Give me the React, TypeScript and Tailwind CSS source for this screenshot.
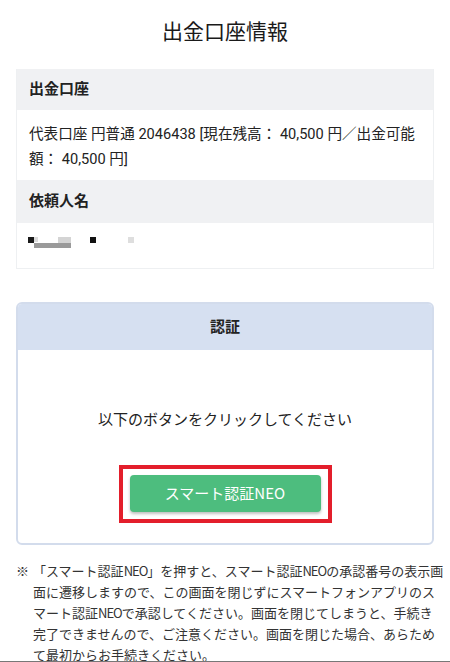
const font = { fontFamily: 'Roboto, "Noto Sans CJK JP", sans-serif' };
const cjk = { fontFamily: '"Noto Sans CJK JP", sans-serif' };

// the note's latin is set narrower, as on the phone
const Neo = () => <span className="tracking-[-1px]">NEO</span>;

// blurred-out requester name
const Mosaic = () => (
  <div className="flex flex-col pl-[11px]">
    <div className="flex h-[6px] items-start">
      <span className="h-[6px] w-[6px] bg-[#1a1a1a]" />
      <span className="h-[5px] w-[4px] bg-[#dcdcdc]" />
      <span className="ml-[20px] h-[6px] w-[13px] bg-[#d4d4d4]" />
      <span className="ml-[19px] h-[6px] w-[6px] bg-[#111]" />
      <span className="ml-[32px] h-[6px] w-[6px] bg-[#dedede]" />
    </div>
    <div className="ml-[6px] h-[5px] w-[37px] bg-[#9a9a9a]" />
  </div>
);

const App = () => {
  return (
    <div className="min-h-screen bg-white text-[#222]" style={font}>
      <h1 className="pt-[17px] text-center text-[21px] leading-[30px] font-normal text-[#1a1a1a]">
        出金口座情報
      </h1>

      <div className="mx-4 mt-[22px] border-x border-b border-[#eef0f2]">
        <div className="bg-[#f0f1f3] px-3 py-[10px] text-[15px] leading-[21px] font-bold">出金口座</div>
        <div className="pl-3 pr-2 pt-[12px] pb-[8px] text-[14.6px] leading-[25px]">
          代表口座 円普通 2046438 [現在残高： 40,500 円／出金可能額： 40,500 円]
        </div>
        <div className="bg-[#f0f1f3] px-3 py-[11px] text-[15px] leading-[21px] font-bold">依頼人名</div>
        <div className="h-[45px] pt-[14px]">
          <Mosaic />
        </div>
      </div>

      <div className="mx-4 mt-[33px] overflow-hidden rounded-[6px] border-2 border-[#d3dcec]">
        <div className="bg-[#d6e0f1] py-[12px] text-center text-[15px] leading-[22px] font-bold">認証</div>
        <div className="flex flex-col items-center pt-[60px] pb-[20px]">
          <p className="text-[15px] leading-[21px]">以下のボタンをクリックしてください</p>
          <div className="mt-[34px] border-4 border-[#e31e2b] px-[7px] pt-[6px] pb-[7px]">
            <button
              className="h-[37px] w-[191px] rounded-[4px] bg-[#4dbd7e] text-[15px] text-white shadow-[0_2px_3px_rgba(0,0,0,0.25)]"
              style={cjk}
            >
              スマート認証NEO
            </button>
          </div>
        </div>
      </div>

      <div className="mt-[15px] flex pl-4 text-[13px] leading-[21px] text-[#333]" style={cjk}>
        <span className="w-[17px] shrink-0">※</span>
        <p className="w-[412px] shrink-0">
          「スマート認証<Neo />」を押すと、スマート認証<Neo />の承認番号の表示画面に遷移しますので、この画面を閉じずにスマートフォンアプリのスマート認証<Neo />で承認してください。画面を閉じてしまうと、手続き完了できませんので、ご注意ください。画面を閉じた場合、あらためて最初からお手続きください。
        </p>
      </div>

      <div className="fixed bottom-0 left-0 right-0 h-px bg-[#777]" />
    </div>
  );
};

export default App;
